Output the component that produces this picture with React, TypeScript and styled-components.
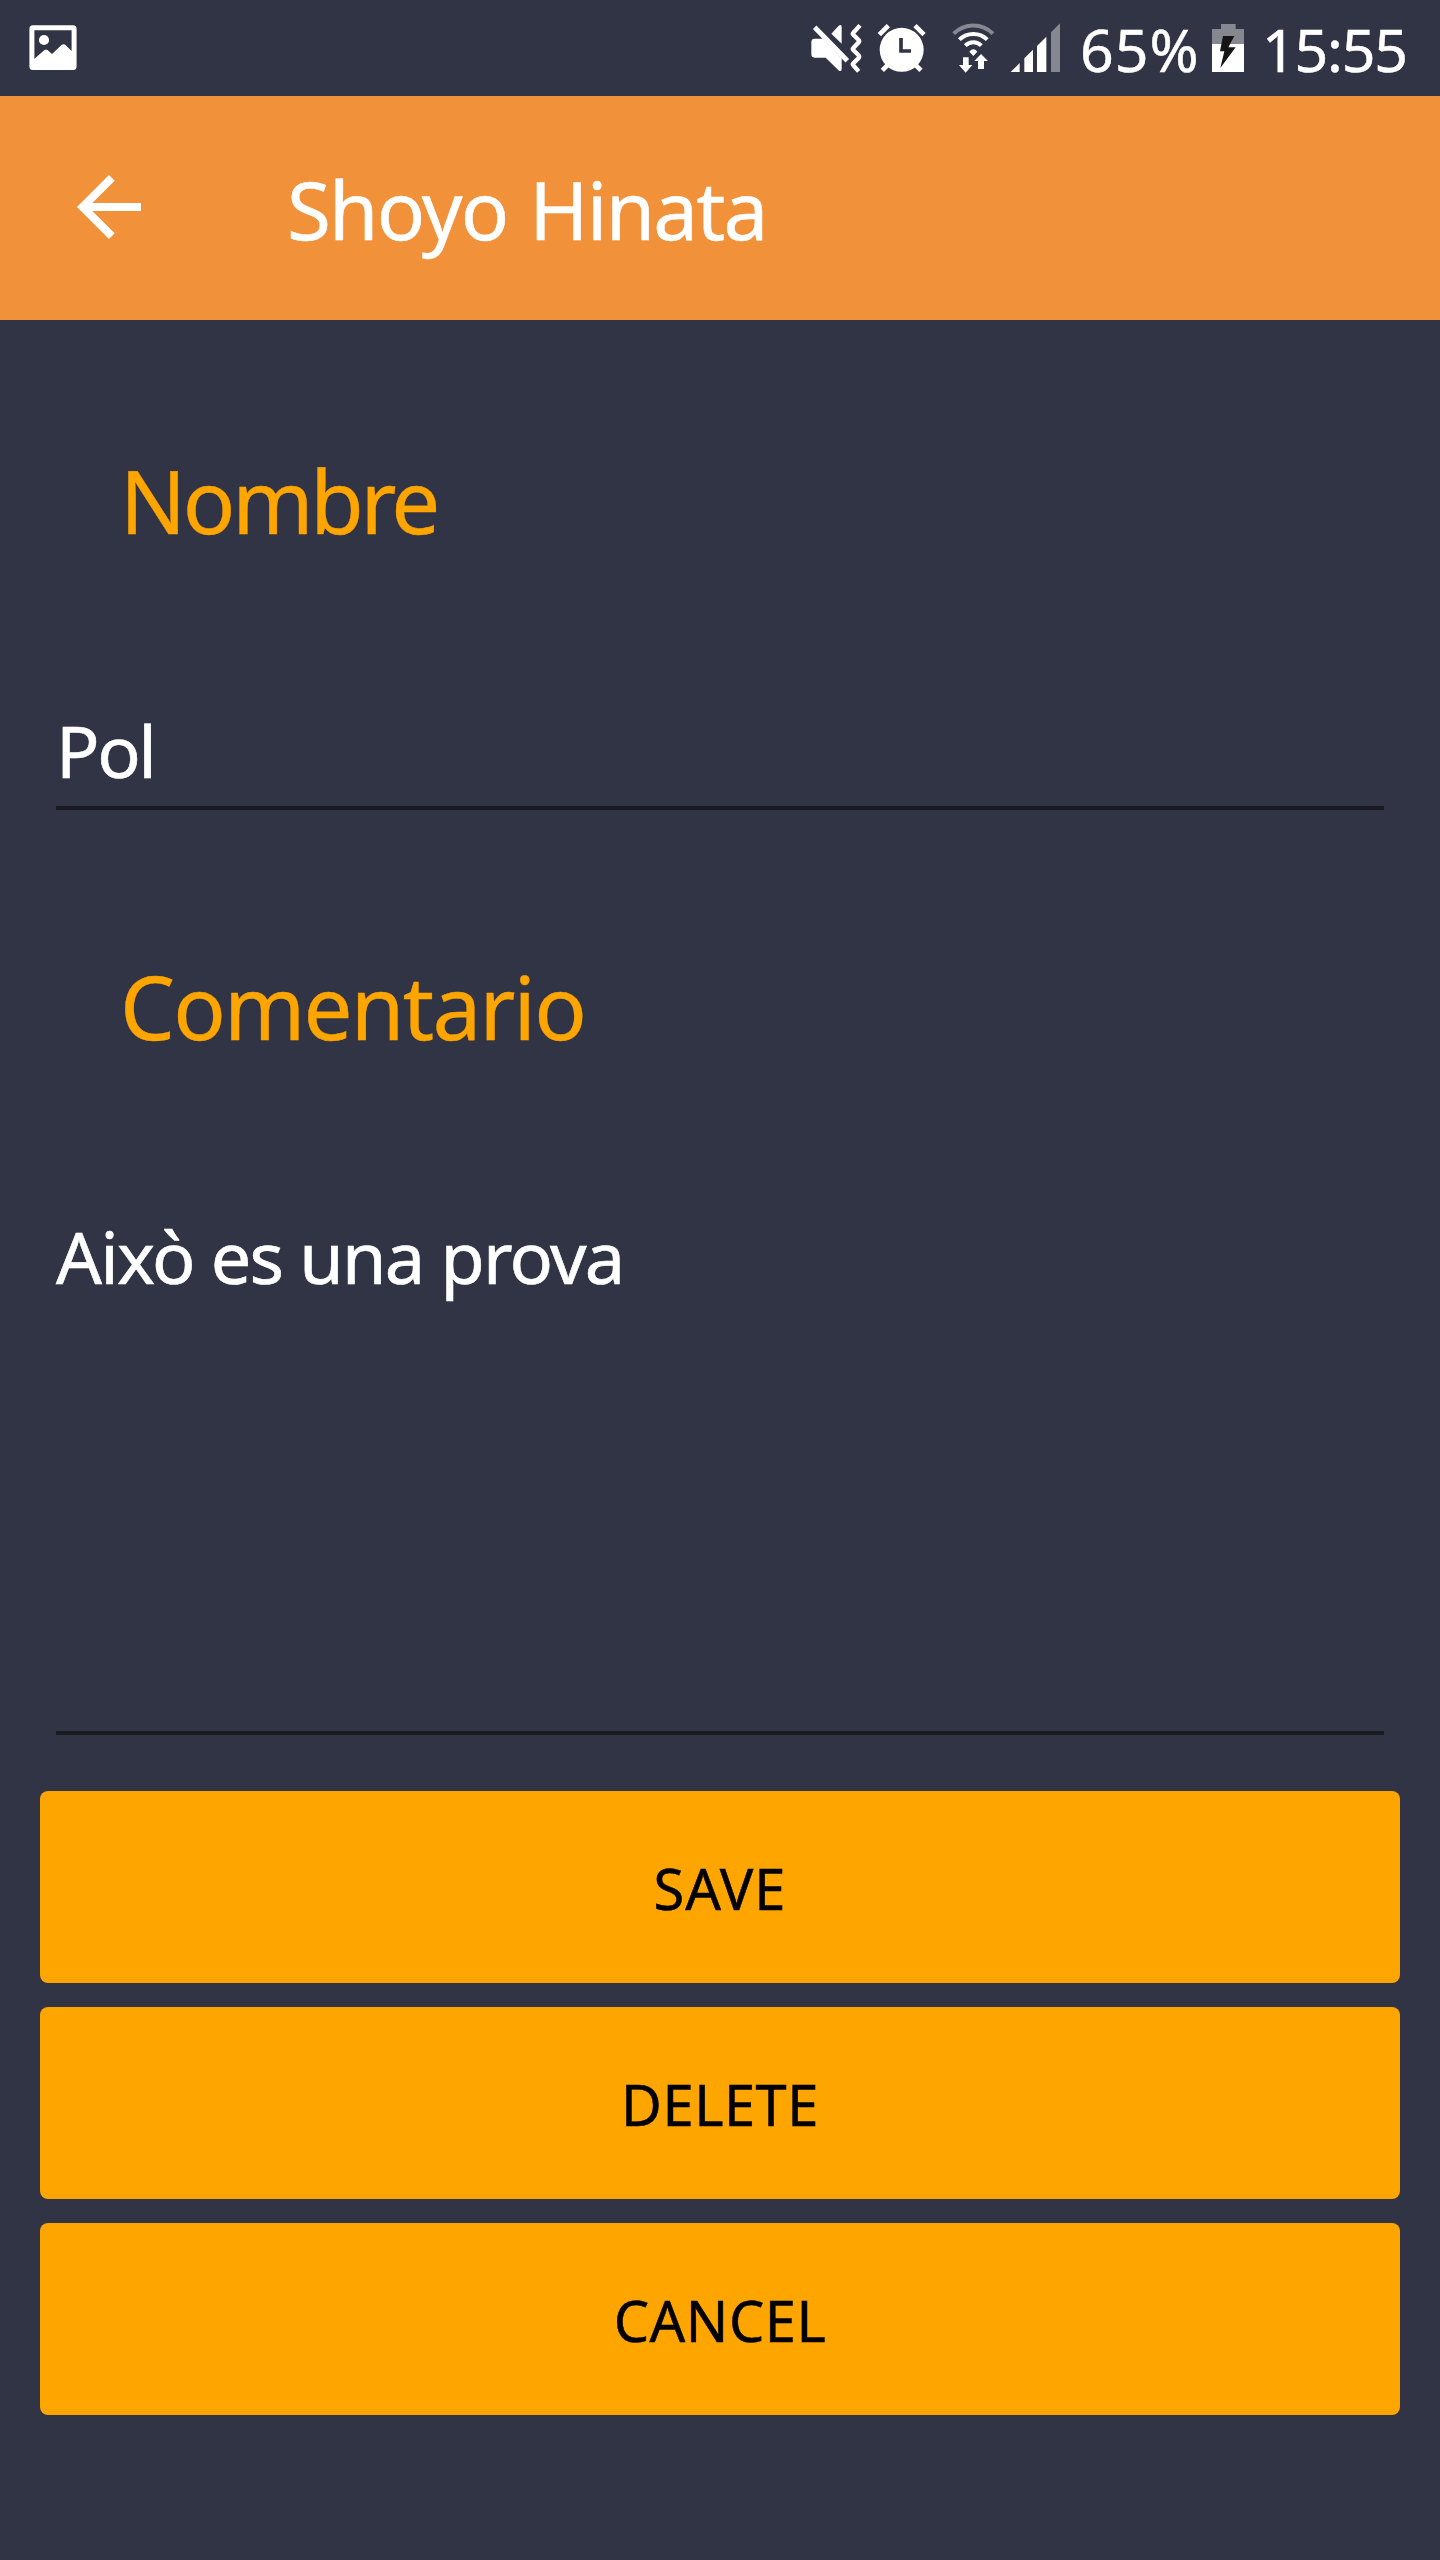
import React from "react";
import styled, { createGlobalStyle } from "styled-components";

const colors = {
  background: "#313445",
  bar: "#f1923a",
  accent: "#ffa500",
  underline: "#1a1b22",
  dim: "#858791",
};

const GlobalStyle = createGlobalStyle`
  * { box-sizing: border-box; }
  body {
    margin: 0;
    background: ${colors.background};
    font-family: "Noto Sans", "Open Sans", sans-serif;
  }
`;

const Screen = styled.div`
  display: flex;
  flex-direction: column;
  width: 1440px;
  height: 2560px;
  background: ${colors.background};
  color: #fff;
  overflow: hidden;
`;

const StatusBar = styled.div`
  display: flex;
  align-items: center;
  flex: none;
  height: 96px;
  padding-left: 29px;
`;

const StatusIcon = styled.svg<{ $gap?: number }>`
  display: block;
  flex: none;
  margin-left: ${(p) => p.$gap ?? 0}px;
`;

const StatusGroup = styled.div`
  display: flex;
  align-items: center;
  width: 630px;
  margin-left: auto;
`;

const StatusText = styled.span<{ $gap: number; $width: number; $spacing: number }>`
  flex: none;
  width: ${(p) => p.$width}px;
  margin-left: ${(p) => p.$gap}px;
  padding-top: 1px;
  font-size: 59px;
  line-height: 80px;
  letter-spacing: ${(p) => p.$spacing}px;
  white-space: nowrap;
  -webkit-text-stroke: 0.5px currentColor;
`;

const AppBar = styled.header`
  display: flex;
  align-items: center;
  flex: none;
  height: 224px;
  padding-left: 61px;
  background: ${colors.bar};
`;

const BackButton = styled.button`
  display: block;
  flex: none;
  width: 96px;
  height: 98px;
  padding: 0 0 2px;
  border: 0;
  background: none;
  color: #fff;

  svg { display: block; }
`;

const Title = styled.h1`
  margin: 0 0 0 130px;
  padding-top: 2px;
  font-size: 80px;
  font-weight: 400;
  line-height: 108px;
  letter-spacing: -1.8px;
  word-spacing: 3px;
  white-space: nowrap;
  -webkit-text-stroke: 0.5px currentColor;
`;

const Form = styled.main`
  display: flex;
  flex-direction: column;
  padding: 121px 40px 0;
`;

const Label = styled.label<{ $spacing: number }>`
  display: block;
  height: 118px;
  padding-left: 80px;
  color: ${colors.accent};
  font-size: 87px;
  line-height: 118px;
  letter-spacing: ${(p) => p.$spacing}px;
  -webkit-text-stroke: 0.4px currentColor;
`;

const Field = styled.div<{ $height: number; $bottom: number; $spacing: number }>`
  height: ${(p) => p.$height}px;
  margin: 141px 16px ${(p) => p.$bottom}px;
  border-bottom: 4px solid ${colors.underline};
  font-size: 72px;
  line-height: 100px;
  letter-spacing: ${(p) => p.$spacing}px;
  -webkit-text-stroke: 0.6px currentColor;
`;

const Actions = styled.div`
  display: flex;
  flex-direction: column;
  gap: 24px;
`;

const Action = styled.button<{ $spacing: number }>`
  height: 192px;
  padding: 2px 0 0;
  border: 0;
  border-radius: 8px;
  background: ${colors.accent};
  color: #000;
  font-family: inherit;
  font-size: 56px;
  line-height: 76px;
  letter-spacing: ${(p) => p.$spacing}px;
  -webkit-text-stroke: 0.5px currentColor;
`;

const PictureIcon = () => (
  <StatusIcon width="48" height="52" viewBox="29 22 48 52">
    <path
      fill="#fff"
      fillRule="evenodd"
      d="M33 25.3H73Q76.6 25.3 76.6 29V66.5Q76.6 70 73 70H33Q29.4 70 29.4 66.5V29Q29.4 25.3 33 25.3ZM34.4 30.3V58.7L44.5 50Q46 49 47.5 50L52 54L61.5 45Q63.5 43.3 65.5 45L71.6 51V30.3Z"
    />
    <circle cx="44" cy="40" r="5.1" fill="#fff" />
  </StatusIcon>
);

const MuteIcon = () => (
  <StatusIcon width="53" height="52" viewBox="60 66 159 156">
    <path
      fill="#fff"
      d="M74 116H99L155 175V207Q155 216 147 212L107 173H74Q64 173 64 163V126Q64 116 74 116ZM124 101L146 77Q155 72 155 81V131Z"
    />
    <path d="M74 82L172 182" stroke="#fff" strokeWidth="15" />
    <path
      d="M210 76L190 98Q187 101 190 104L206 120Q209 123 206 127L190 144Q187 147 190 150L206 166Q209 170 206 174L190 190Q187 193 190 196L206 214"
      fill="none"
      stroke="#fff"
      strokeWidth="13"
    />
  </StatusIcon>
);

const AlarmIcon = () => (
  <StatusIcon width="49" height="52" viewBox="261 66 147 156">
    <circle cx="335" cy="149.500" r="66" fill="#fff" />
    <path
      d="M268 104L295 77M375 77L402 104M295 193L277 211M375 193L393 211"
      stroke="#fff"
      strokeWidth="14"
    />
    <path d="M333 114V153H363" fill="none" stroke={colors.background} strokeWidth="11" />
  </StatusIcon>
);

const WifiIcon = () => (
  <StatusIcon width="43" height="52" viewBox="486 66 129 156">
    <g fill="none" strokeWidth="12">
      <path d="M491 101A83 83 0 0 1 609 101" stroke={colors.dim} />
      <path d="M508 119A60 60 0 0 1 592 119" stroke="#fff" />
      <path d="M526 137A34 34 0 0 1 574 137" stroke="#fff" />
    </g>
    <path
      fill="#fff"
      d="M538 155Q550 141 562 155L550 168ZM519 172H536V195H547L527 218L507 195H519ZM573 162L594 183H582V207H564V183H553Z"
    />
  </StatusIcon>
);

const SignalIcon = () => (
  <StatusIcon width="50" height="52" viewBox="660 66 150 156" $gap={15}>
    <path fill="#fff" d="M662 216L689 189V216ZM703 216V175L729 149V216ZM741 216V138L769 110V216Z" />
    <path fill={colors.dim} d="M783 216V97L810 70V216Z" />
  </StatusIcon>
);

const BatteryIcon = () => (
  <StatusIcon width="32" height="52" viewBox="456 66 96 156">
    <path fill={colors.dim} d="M483 72H527V87H552V132H456V87H483Z" />
    <path fill="#fff" d="M456 132H552V216H456Z" />
    <path fill="#151515" d="M489 108H523L505 142H527L481 204L493 154H480Z" />
  </StatusIcon>
);

const IconSlot = styled.div<{ $gap: number }>`
  flex: none;
  margin-left: ${(p) => p.$gap}px;
`;

export default function App() {
  return (
    <>
      <GlobalStyle />
      <Screen>
        <StatusBar>
          <PictureIcon />
          <StatusGroup>
            <IconSlot $gap={0}><MuteIcon /></IconSlot>
            <IconSlot $gap={14}><AlarmIcon /></IconSlot>
            <IconSlot $gap={26}><WifiIcon /></IconSlot>
            <SignalIcon />
            <StatusText $gap={20} $width={132} $spacing={1}>65%</StatusText>
            <IconSlot $gap={0}><BatteryIcon /></IconSlot>
            <StatusText $gap={18} $width={160} $spacing={-1.2}>15:55</StatusText>
          </StatusGroup>
        </StatusBar>
        <AppBar>
          <BackButton aria-label="Back">
            <svg width="96" height="96" viewBox="0 0 24 24">
              <path fill="currentColor" d="M20 11H7.830l5.590-5.590L12 4l-8 8 8 8 1.410-1.410L7.830 13H20v-2z" />
            </svg>
          </BackButton>
          <Title>Shoyo Hinata</Title>
        </AppBar>
        <Form>
          <Label $spacing={-3.3}>Nombre</Label>
          <Field $height={110} $bottom={137} $spacing={-2.4}>Pol</Field>
          <Label $spacing={-1.8}>Comentario</Label>
          <Field $height={529} $bottom={56} $spacing={-1.75}>Això es una prova</Field>
          <Actions>
            <Action $spacing={1}>SAVE</Action>
            <Action $spacing={0.5}>DELETE</Action>
            <Action $spacing={0.5}>CANCEL</Action>
          </Actions>
        </Form>
      </Screen>
    </>
  );
}
